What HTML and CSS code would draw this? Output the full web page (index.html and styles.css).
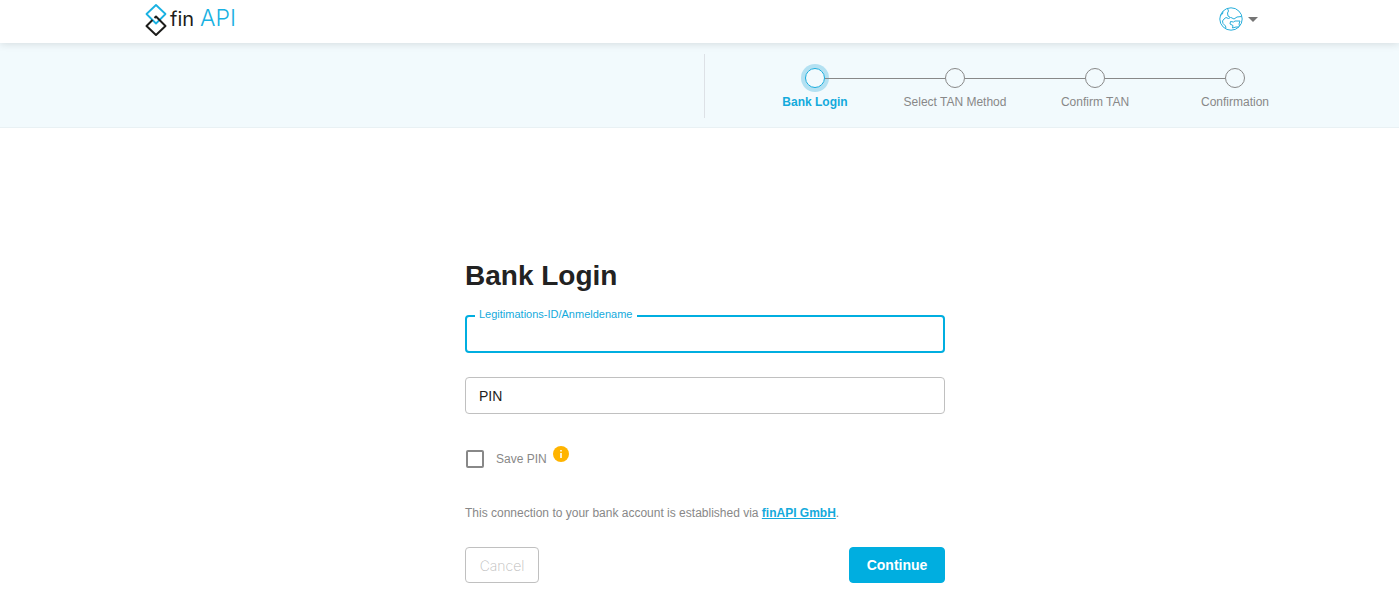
FILE: index.html
```html
<!DOCTYPE html>
<html lang="en">
<head>
    <meta charset="UTF-8">
    <meta name="viewport" content="width=device-width, initial-scale=1.0">
    <title>Bank Login</title>
    <link rel="stylesheet" href="styles.css">
</head>
<body>
    <header class="header">
        <div class="header-inner">
            <a class="logo" href="#" aria-label="finAPI">
                <svg width="102" height="34" viewBox="0 0 102 34" fill="none">
                    <path d="M11 2L20.500 11L11 20.500L1.500 11Z" stroke="#19b1e2" stroke-width="1.800" stroke-linejoin="round"/>
                    <path d="M7.500 17L1.500 23L11 32L20.500 23L11 13.500L9.500 15" stroke="#1d1d1b" stroke-width="2" stroke-linejoin="round"/>
                    <text class="logo-fin" x="25" y="23">fin</text>
                    <text class="logo-api" x="55" y="23">API</text>
                </svg>
            </a>
            <button type="button" class="language" aria-label="Language">
                <svg width="24" height="24" viewBox="0 0 24 24" fill="none" stroke="#27aedb" stroke-width="1">
                    <circle cx="12" cy="12" r="11.200"/>
                    <path d="M8.500 1.500L9.500 4L8.500 6L9 9L11.500 10.500L9.500 11.500L7 10.500L5 12L3.500 14L4 16.500L6.500 19L7 21.500"/>
                    <path d="M1.500 8.500L3.500 7L4 4.500M12 10.500L15 12L18 10L22.500 9.500M11.500 14.500L14.500 15L16 14L21 14L20 17L20.500 19M11.500 14.500L11 17L14 18.500L13.500 21L17 20L20 20"/>
                </svg>
                <svg width="10" height="5" viewBox="0 0 10 5"><path d="M0 0H10L5 5Z" fill="#757575"/></svg>
            </button>
        </div>
    </header>

    <div class="progress">
        <div class="progress-inner">
            <ol class="steps">
                <li class="step active">Bank Login</li>
                <li class="step">Select TAN Method</li>
                <li class="step">Confirm TAN</li>
                <li class="step">Confirmation</li>
            </ol>
        </div>
    </div>

    <main class="content">
        <form class="login">
            <h1>Bank Login</h1>
            <div class="field focused">
                <input type="text" id="loginInput">
                <label for="loginInput">Legitimations-ID/Anmeldename</label>
            </div>
            <div class="field">
                <input type="password" id="pinInput">
                <label for="pinInput">PIN</label>
            </div>
            <div class="save">
                <input type="checkbox" id="savePin">
                <label for="savePin">Save PIN</label>
                <svg class="info" width="16" height="16" viewBox="0 0 16 16">
                    <circle cx="8" cy="8" r="8" fill="#ffb400"/>
                    <path d="M8 4V5.600M8 7V12" stroke="#fff" stroke-width="1.600"/>
                </svg>
            </div>
            <p class="note">This connection to your bank account is established via <a href="#">finAPI GmbH</a>.</p>
            <div class="buttons">
                <button type="button" class="cancel">Cancel</button>
                <button type="submit" class="continue">Continue</button>
            </div>
        </form>
    </main>
</body>
</html>
```
FILE: styles.css
```css
*, *::before, *::after {
    box-sizing: border-box;
}
body {
    margin: 0;
    font-family: "Liberation Sans", Arial, sans-serif;
    font-size: 12px;
    color: #888;
    background-color: #fff;
}
button, input {
    font-family: inherit;
}
.header {
    position: relative;
    padding-left: 11px;
    background-color: #fff;
    box-shadow: 0 1px 8px rgba(0, 0, 0, 0.12);
}
.header-inner {
    display: flex;
    align-items: flex-start;
    justify-content: space-between;
    max-width: 1120px;
    height: 43px;
    margin: 0 auto;
    padding-top: 3px;
}
.logo svg {
    display: block;
}
.logo-fin, .logo-api {
    font-family: Inter, sans-serif;
    font-size: 20px;
}
.logo-fin {
    fill: #1d1d1b;
}
.logo-api {
    font-size: 23px;
    font-weight: 300;
    fill: #19b1e2;
}
.language {
    display: flex;
    align-items: center;
    gap: 5px;
    margin-right: 7px;
    padding: 4px 0;
    border: none;
    background: none;
    cursor: pointer;
}
.progress {
    padding: 11px 0 9px 11px;
    border-bottom: 1px solid #e9f1f4;
    background-color: #f2fafd;
}
.progress-inner {
    display: flex;
    justify-content: flex-end;
    max-width: 1200px;
    margin: 0 auto;
}
.steps {
    display: grid;
    grid-template-columns: repeat(4, 1fr);
    width: 601px;
    height: 64px;
    margin: 0;
    padding: 14px 0 0 40px;
    border-left: 1px solid #dde1e6;
    list-style: none;
}
.step {
    position: relative;
    text-align: center;
    line-height: 14px;
}
.step::before {
    content: "";
    display: block;
    width: 20px;
    height: 20px;
    margin: 0 auto 7px;
    border: 1px solid #888;
    border-radius: 50%;
}
.step:not(:last-child)::after {
    content: "";
    position: absolute;
    top: 10px;
    left: calc(50% + 10px);
    width: calc(100% - 20px);
    height: 1px;
    background-color: #888;
}
.step.active {
    font-weight: bold;
    color: #14aadc;
}
.step.active::before {
    border-color: #14aadc;
    box-shadow: 0 0 0 4px #b3e1f2;
}
.content {
    padding: 130px 0 15px 11px;
}
.login {
    max-width: 480px;
    margin: 0 auto;
}
h1 {
    margin: 0 0 21px;
    font-size: 28px;
    line-height: 36px;
    color: #222;
}
.field {
    position: relative;
    margin-bottom: 24px;
}
.field input {
    display: block;
    width: 100%;
    height: 37px;
    padding: 0 13px;
    border: 1px solid #c0c0c0;
    border-radius: 4px;
    background-color: #fff;
    font-size: 14px;
    outline: none;
}
.field label {
    position: absolute;
    top: 10px;
    left: 14px;
    font-size: 14px;
    line-height: 18px;
    color: #222;
}
.field.focused input {
    height: 38px;
    border: 2px solid #00aee0;
}
.field.focused label {
    top: -8px;
    left: 10px;
    padding: 0 5px 0 4px;
    background-color: #fff;
    font-size: 11px;
    line-height: 14px;
    color: #14aadc;
}
.save {
    display: flex;
    align-items: center;
    height: 18px;
    margin-top: 36px;
}
.save input {
    appearance: none;
    width: 18px;
    height: 18px;
    margin: 0 12px 0 1px;
    border: 2px solid #888;
    border-radius: 2px;
}
.info {
    margin: 0 0 10px 6px;
}
.note {
    margin: 36px 0 25px;
    line-height: 18px;
}
.note a {
    font-weight: bold;
    color: #14aadc;
}
.buttons {
    display: flex;
    justify-content: space-between;
}
.buttons button {
    height: 36px;
    padding: 0 12px;
    border: 1px solid #c0c0c0;
    border-radius: 4px;
    background-color: #fff;
    font-size: 14px;
    cursor: pointer;
}
.buttons .cancel {
    min-width: 74px;
    font-family: Inter, sans-serif;
    font-weight: 200;
    color: #bbb;
}
.buttons .continue {
    min-width: 96px;
    border-color: #00aee0;
    background-color: #00aee0;
    font-weight: bold;
    color: #fff;
}
```
